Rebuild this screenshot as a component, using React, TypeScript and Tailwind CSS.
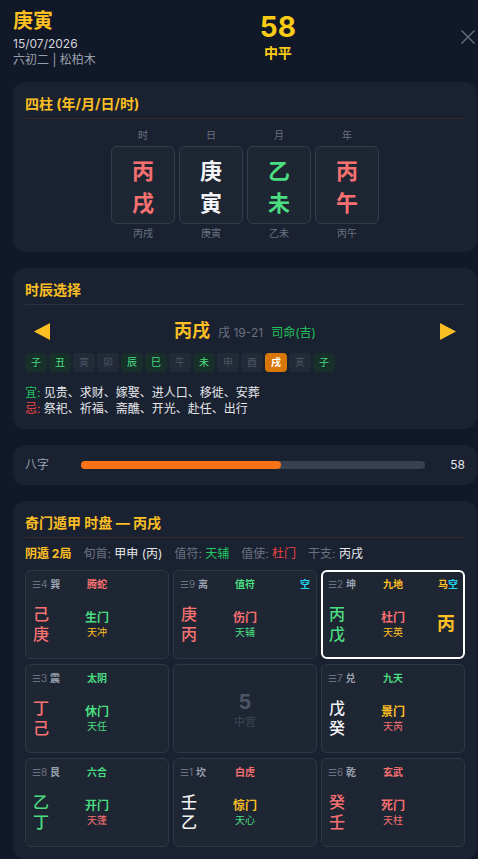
import type { ReactNode } from "react";

type Tone = "red" | "green" | "yellow" | "white" | "cyan";

const tone: Record<Tone, string> = {
  red: "text-[#f87171]",
  green: "text-[#4ade80]",
  yellow: "text-[#fbbf24]",
  white: "text-gray-100",
  cyan: "text-[#22d3ee]",
};

interface Palace {
  num: number;
  gua: string;
  god: [string, Tone];
  stems: [string, Tone][];
  door: [string, Tone];
  star: [string, Tone];
  corner?: ReactNode;
  side?: [string, Tone];
  active?: boolean;
}

const palaces: (Palace | null)[] = [
  { num: 4, gua: "巽", god: ["腾蛇", "red"], stems: [["己", "red"], ["庚", "red"]], door: ["生门", "green"], star: ["天冲", "yellow"] },
  {
    num: 9,
    gua: "离",
    god: ["值符", "green"],
    stems: [["庚", "red"], ["丙", "red"]],
    door: ["伤门", "red"],
    star: ["天辅", "green"],
    corner: <span className="text-[#22d3ee]">空</span>,
  },
  {
    num: 2,
    gua: "坤",
    god: ["九地", "yellow"],
    stems: [["丙", "green"], ["戊", "green"]],
    door: ["杜门", "red"],
    star: ["天英", "yellow"],
    corner: (
      <>
        <span className="text-[#fbbf24]">马</span>
        <span className="text-[#22d3ee]">空</span>
      </>
    ),
    side: ["丙", "yellow"],
    active: true,
  },
  { num: 3, gua: "震", god: ["太阴", "green"], stems: [["丁", "red"], ["己", "red"]], door: ["休门", "green"], star: ["天任", "green"] },
  null,
  { num: 7, gua: "兑", god: ["九天", "green"], stems: [["戊", "white"], ["癸", "white"]], door: ["景门", "yellow"], star: ["天芮", "red"] },
  { num: 8, gua: "艮", god: ["六合", "green"], stems: [["乙", "green"], ["丁", "green"]], door: ["开门", "green"], star: ["天蓬", "red"] },
  { num: 1, gua: "坎", god: ["白虎", "red"], stems: [["壬", "white"], ["乙", "white"]], door: ["惊门", "yellow"], star: ["天心", "green"] },
  { num: 6, gua: "乾", god: ["玄武", "red"], stems: [["癸", "red"], ["壬", "red"]], door: ["死门", "red"], star: ["天柱", "red"] },
];

const pillars: { label: string; top: [string, Tone]; bottom: [string, Tone] }[] = [
  { label: "时", top: ["丙", "red"], bottom: ["戌", "red"] },
  { label: "日", top: ["庚", "white"], bottom: ["寅", "white"] },
  { label: "月", top: ["乙", "green"], bottom: ["未", "green"] },
  { label: "年", top: ["丙", "red"], bottom: ["午", "red"] },
];

const hours: { name: string; kind: "good" | "bad" | "current" }[] = [
  { name: "子", kind: "good" },
  { name: "丑", kind: "good" },
  { name: "寅", kind: "bad" },
  { name: "卯", kind: "bad" },
  { name: "辰", kind: "good" },
  { name: "巳", kind: "good" },
  { name: "午", kind: "bad" },
  { name: "未", kind: "good" },
  { name: "申", kind: "bad" },
  { name: "酉", kind: "bad" },
  { name: "戌", kind: "current" },
  { name: "亥", kind: "bad" },
  { name: "子", kind: "good" },
];

const chipStyle = {
  good: "bg-[#17302a] text-[#4ade80]",
  bad: "bg-[#222a38] text-[#4b5563]",
  current: "bg-[#d97706] font-bold text-white",
};

function Card({ title, line, children }: { title?: string; line?: string; children: ReactNode }) {
  return (
    <section className="rounded-xl bg-[#1a2130] p-3">
      {title && (
        <h2 className={`border-b pb-1 text-sm font-bold leading-5 text-[#fbbf24] ${line ?? "border-[#3a2828]"}`}>
          {title}
        </h2>
      )}
      {children}
    </section>
  );
}

function PalaceCell({ p }: { p: Palace | null }) {
  if (!p) {
    return (
      <div className="flex h-[89px] flex-col items-center justify-center rounded-md border border-[#2f3745] bg-[#1e2533] pt-[2px]">
        <span className="text-xl font-bold leading-6 text-[#4b5563]">5</span>
        <span className="mt-[1px] text-[11px] leading-[14px] text-[#3f4856]">中宫</span>
      </div>
    );
  }
  return (
    <div
      className={`h-[89px] rounded-md bg-[#1e2533] ${
        p.active ? "border-2 border-white px-[5px] pt-[5px]" : "border border-[#2f3745] px-[6px] pt-[6px]"
      }`}
    >
      <div className="grid grid-cols-3 items-center text-[10px] leading-[14px]">
        <span className="text-gray-500">
          ☰{p.num} <span className="font-bold text-gray-400">{p.gua}</span>
        </span>
        <span className={`text-center font-bold ${tone[p.god[1]]}`}>{p.god[0]}</span>
        <span className="text-right font-bold">{p.corner}</span>
      </div>
      <div className="mt-[13px] grid grid-cols-3 items-center">
        <div className="flex flex-col pl-[1px] text-base font-medium leading-5">
          {p.stems.map(([s, t], i) => (
            <span key={i} className={tone[t]}>
              {s}
            </span>
          ))}
        </div>
        <div className="flex flex-col items-center">
          <span className={`text-xs font-bold leading-4 ${tone[p.door[1]]}`}>{p.door[0]}</span>
          <span className={`text-[10px] leading-3 ${tone[p.star[1]]}`}>{p.star[0]}</span>
        </div>
        <div className="pr-[3px] text-right">
          {p.side && <span className={`text-lg font-bold ${tone[p.side[1]]}`}>{p.side[0]}</span>}
        </div>
      </div>
    </div>
  );
}

export default function App() {
  const score = 58;

  return (
    <div className="min-h-screen bg-[#111827] pb-4 font-['Inter','Noto_Sans_CJK_SC',sans-serif]">
      <header className="flex items-start justify-between pl-[13px] pr-[2px] pt-[7px]">
        <div>
          <div className="text-xl font-bold leading-7 text-[#fbbf24]">庚寅</div>
          <div className="mt-px text-xs leading-4 text-gray-300">15/07/2026</div>
          <div className="text-xs leading-4 text-gray-400">六初二 | 松柏木</div>
        </div>
        <div className="mt-1 flex flex-col items-center">
          <span className="text-[28px] font-bold leading-8 text-[#facc15]">{score}</span>
          <span className="text-sm font-bold leading-5 text-[#facc15]">中平</span>
        </div>
        <button type="button" className="mt-[22px] text-gray-500">
          <svg width="16" height="16" viewBox="0 0 16 16" fill="none" stroke="currentColor" strokeWidth="1.3">
            <path d="M1.5 1.5l13 13M14.5 1.5l-13 13" />
          </svg>
        </button>
      </header>

      <main className="mt-[14px] flex flex-col gap-4 pl-[13px] pr-[1px]">
        <Card title="四柱 (年/月/日/时)">
          <div className="mt-2 flex justify-center gap-1">
            {pillars.map((c) => (
              <div key={c.label} className="flex w-16 flex-col items-center">
                <span className="text-[10px] leading-4 text-gray-500">{c.label}</span>
                <div className="mt-[3px] flex h-[78px] w-16 flex-col items-center justify-center rounded-md border border-[#343c4a] bg-[#1e2533] pt-[3px] text-[22px] font-bold leading-8">
                  <span className={tone[c.top[1]]}>{c.top[0]}</span>
                  <span className={tone[c.bottom[1]]}>{c.bottom[0]}</span>
                </div>
                <span className="mt-[2px] text-[10px] leading-[14px] text-gray-500">
                  {c.top[0]}
                  {c.bottom[0]}
                </span>
              </div>
            ))}
          </div>
        </Card>

        <Card title="时辰选择" line="border-[#2a303c]">
          <div className="mt-3 flex h-7 items-center justify-between">
            <button type="button" className="pl-[9px]">
              <svg width="16" height="17" viewBox="0 0 16 17">
                <polygon points="16,0 16,17 0,8.5" fill="#fbbf24" />
              </svg>
            </button>
            <div className="flex items-baseline">
              <span className="text-lg font-bold text-[#fbbf24]">丙戌</span>
              <span className="ml-2 text-xs text-gray-500">戌 19-21</span>
              <span className="ml-2 text-xs text-[#22c55e]">司命(吉)</span>
            </div>
            <button type="button" className="pr-[9px]">
              <svg width="16" height="17" viewBox="0 0 16 17">
                <polygon points="0,0 0,17 16,8.5" fill="#fbbf24" />
              </svg>
            </button>
          </div>
          <div className="mt-2 flex gap-[2px]">
            {hours.map((h, i) => (
              <span
                key={i}
                className={`flex h-[19px] w-[22px] items-center justify-center rounded text-[10px] ${chipStyle[h.kind]}`}
              >
                {h.name}
              </span>
            ))}
          </div>
          <p className="mt-[13px] text-xs leading-4 text-gray-200">
            <span className="text-[#22c55e]">宜:</span> 见贵、求财、嫁娶、进人口、移徙、安葬
          </p>
          <p className="text-xs leading-4 text-gray-200">
            <span className="text-[#ef4444]">忌:</span> 祭祀、祈福、斋醮、开光、赴任、出行
          </p>
        </Card>

        <section className="flex items-center rounded-xl bg-[#1a2130] px-3 py-3">
          <span className="w-14 text-xs leading-4 text-gray-400">八字</span>
          <div className="h-2 flex-1 rounded-full bg-[#374151]">
            <div className="h-2 rounded-full bg-[#f97316]" style={{ width: `${score}%` }} />
          </div>
          <span className="w-10 text-right text-xs leading-4 text-gray-200">{score}</span>
        </section>

        <Card title="奇门遁甲 时盘 — 丙戌" line="border-[#3a2a24]">
          <div className="mt-2 flex gap-x-3 text-xs leading-4">
            <span className="font-bold text-[#fbbf24]">阴遁 2局</span>
            <span className="text-gray-500">
              旬首: <span className="text-gray-200">甲申 (丙)</span>
            </span>
            <span className="text-gray-500">
              值符: <span className="text-[#22c55e]">天辅</span>
            </span>
            <span className="text-gray-500">
              值使: <span className="text-[#ef4444]">杜门</span>
            </span>
            <span className="text-gray-500">
              干支: <span className="text-gray-200">丙戌</span>
            </span>
          </div>
          <div className="mt-2 grid grid-cols-3 gap-x-1 gap-y-[5px]">
            {palaces.map((p, i) => (
              <PalaceCell key={i} p={p} />
            ))}
          </div>
        </Card>
      </main>
    </div>
  );
}
